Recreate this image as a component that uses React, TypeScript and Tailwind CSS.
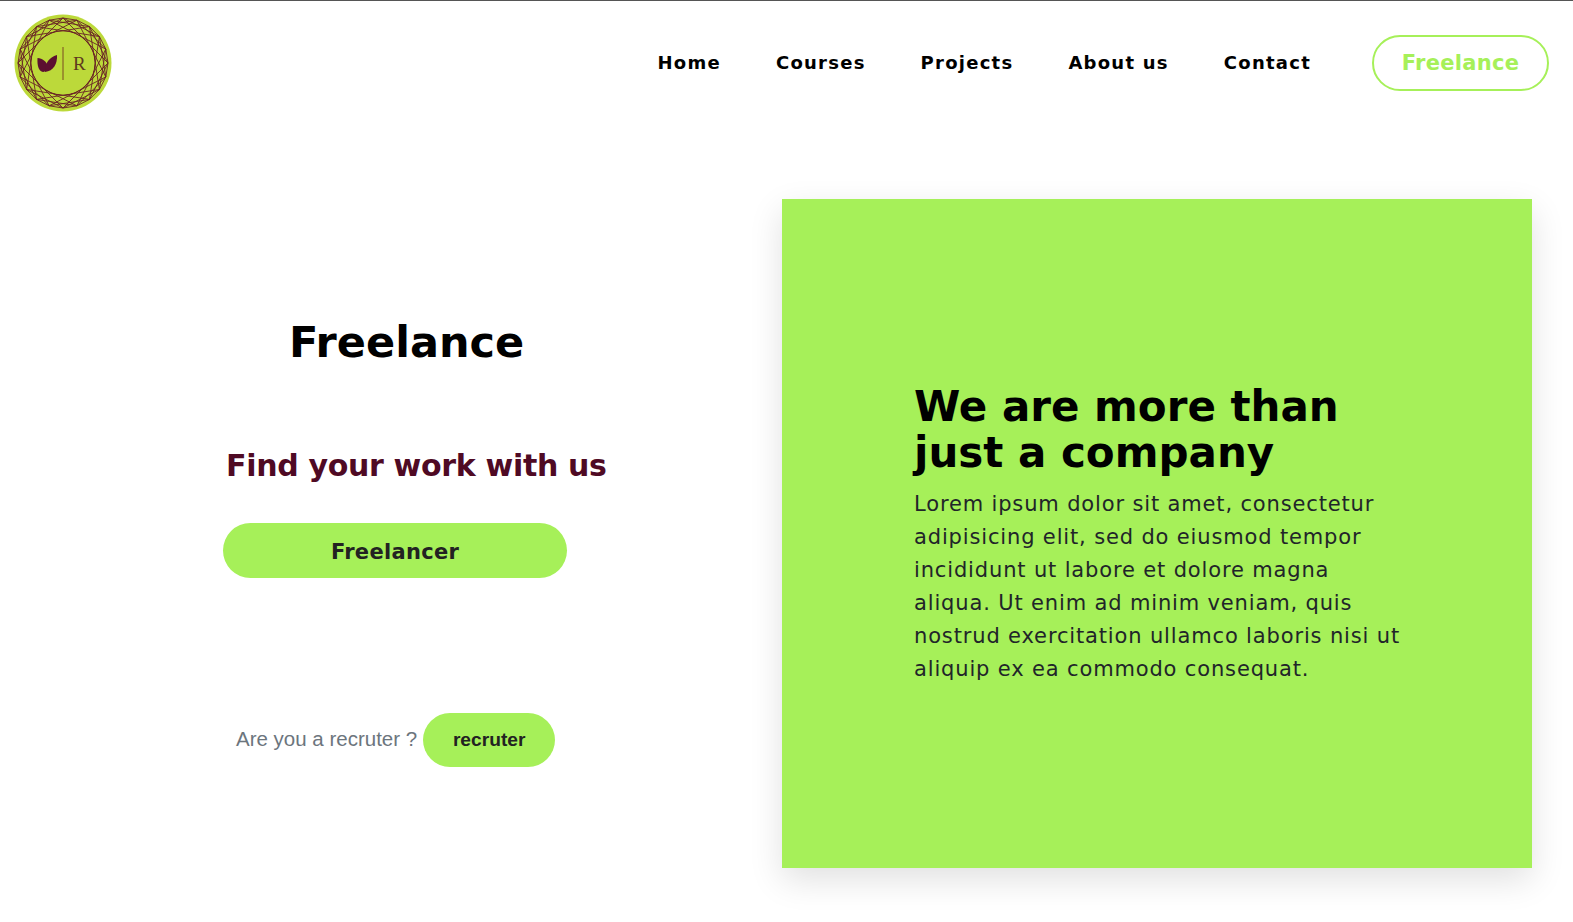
const wide = "font-['DejaVu_Sans',sans-serif]";

function Logo() {
  // lattice ring: chords between points on the outer circle
  const pts = Array.from({ length: 20 }, (_, i) => {
    const a = (i * Math.PI) / 10;
    return [49 + 45 * Math.cos(a), 49 + 45 * Math.sin(a)];
  });
  return (
    <svg width="98" height="98" viewBox="0 0 98 98" className="shrink-0">
      <circle cx="49" cy="49" r="48.5" fill="#bcd93a" />
      <g fill="none" stroke="#6a2526" strokeWidth="0.9">
        <circle cx="49" cy="49" r="32" strokeWidth="1.1" />
        {pts.map((p, i) => {
          const a = pts[(i + 5) % 20];
          const b = pts[(i + 3) % 20];
          return (
            <g key={i}>
              <line x1={p[0]} y1={p[1]} x2={a[0]} y2={a[1]} />
              <line x1={p[0]} y1={p[1]} x2={b[0]} y2={b[1]} />
              <line x1={p[0]} y1={p[1]} x2={pts[(i + 1) % 20][0]} y2={pts[(i + 1) % 20][1]} />
            </g>
          );
        })}
      </g>
      <circle cx="49" cy="49" r="31.4" fill="#bcd93a" />
      <path d="M29 58c-4-1-6-5-5.500-14 5 .5 9 3.500 10 7.500.5 3-1.500 6-4.500 6.500z" fill="#5c1030" />
      <path d="M31 58c-.5-8 4-15 12-17 .5 9-3.500 16-12 17z" fill="#5c1030" />
      <line x1="49" y1="33" x2="49" y2="66" stroke="#7a4a20" strokeWidth="1" />
      <text x="59" y="56" fontSize="19" fill="#5e3a1e" className="font-['Liberation_Serif',serif]">R</text>
    </svg>
  );
}

export default function App() {
  const links = ["Home", "Courses", "Projects", "About us", "Contact"];
  return (
    <div className="min-h-[922px] bg-white border-t border-[#555] overflow-hidden">
      <header className="flex items-center justify-between h-[124px] pl-[14px] pr-6">
        <Logo />
        <nav className={`flex items-center ${wide}`}>
          <div className="flex gap-[55px] mr-[61px] pb-[2px]">
            {links.map((l) => (
              <a key={l} className="text-[18px] font-bold text-black tracking-[1.25px]">{l}</a>
            ))}
          </div>
          <button className="w-[177px] h-[56px] pt-[2px] rounded-[28px] border-2 border-[#a6f059] text-[#a6f059] text-[21px] font-bold tracking-[0.3px]">
            Freelance
          </button>
        </nav>
      </header>

      <main className="flex pt-[74px]">
        <section className="w-[782px] shrink-0 flex flex-col items-start">
          <h1 className={`${wide} ml-[289px] mt-[118px] text-[43px] leading-[50px] font-bold text-black`}>Freelance</h1>
          <h2 className={`${wide} ml-[226px] mt-[80px] text-[30px] leading-[38px] font-bold tracking-[-0.32px] text-[#4f0a24]`}>Find your work with us</h2>
          <button className={`${wide} ml-[223px] mt-[38px] w-[344px] h-[55px] pt-[4px] rounded-[28px] bg-[#a6f059] text-[21px] font-bold tracking-[0.3px] text-[#222]`}>
            Freelancer
          </button>
          <div className="ml-[236px] mt-[135px] flex items-center gap-[6px] font-['Liberation_Sans',sans-serif]">
            <span className="text-[20.5px] leading-[28px] mb-[2px] text-[#6c757d]">Are you a recruter ?</span>
            <button className="w-[132px] h-[54px] rounded-[27px] bg-[#a6f059] text-[19.2px] font-bold text-[#222]">recruter</button>
          </div>
        </section>

        <section className="w-[750px] h-[669px] bg-[#a6f059] shadow-[0_12px_32px_rgba(0,0,0,0.12)] flex flex-col justify-center pt-[2px] pl-[132px] pr-[128px]">
          <h2 className={`${wide} text-[42px] leading-[46px] font-bold text-black`}>We are more than just a company</h2>
          <p className={`${wide} mt-[12px] text-[21px] leading-[33px] tracking-[0.85px] text-[#212529]`}>
            Lorem ipsum dolor sit amet, consectetur adipisicing elit, sed do eiusmod tempor incididunt ut labore et dolore magna aliqua. Ut enim ad minim veniam, quis nostrud exercitation ullamco laboris nisi ut aliquip ex ea commodo consequat.
          </p>
        </section>
      </main>
    </div>
  );
}
